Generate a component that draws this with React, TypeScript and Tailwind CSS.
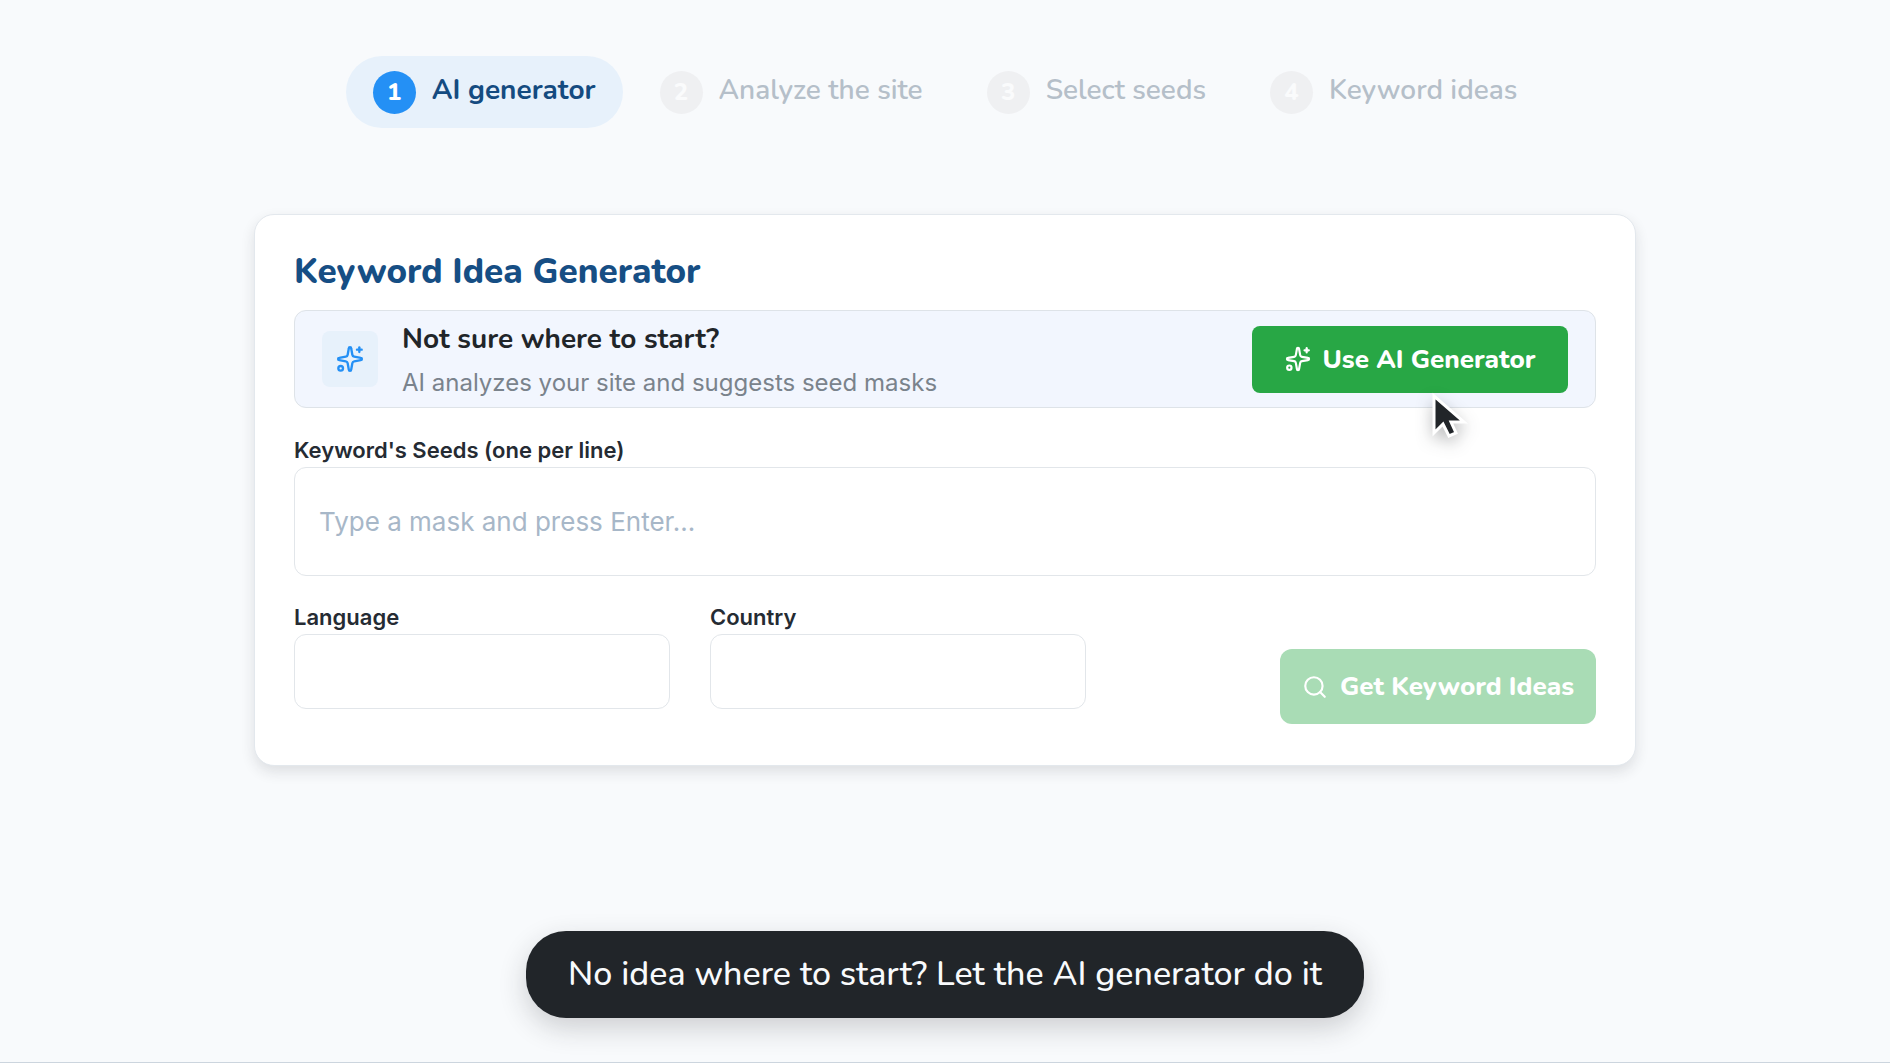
import { Search } from "lucide-react";

const steps = [
  "AI generator",
  "Analyze the site",
  "Select seeds",
  "Keyword ideas",
];

function SparkIcon({ className }: { className: string }) {
  return (
    <svg
      viewBox="0 0 24 24"
      fill="none"
      stroke="currentColor"
      strokeWidth="2"
      strokeLinecap="round"
      strokeLinejoin="round"
      className={className}
    >
      <path d="M11 2.8a1 1 0 0 1 2 0l1 5.600a2 2 0 0 0 1.600 1.600l5.600 1a1 1 0 0 1 0 2l-5.600 1a2 2 0 0 0-1.600 1.600l-1 5.600a1 1 0 0 1-2 0l-1-5.600a2 2 0 0 0-1.600-1.600l-5.600-1a1 1 0 0 1 0-2l5.600-1a2 2 0 0 0 1.600-1.600z" />
      <path d="M20 2v4" />
      <path d="M22 4h-4" />
      <circle cx="4" cy="20" r="2" />
    </svg>
  );
}

function Pointer() {
  return (
    <svg
      viewBox="0 0 36 48"
      className="absolute left-[180px] top-[66px] w-9 h-12 overflow-visible drop-shadow-[0_6px_8px_rgba(33,37,41,0.3)]"
    >
      <path
        d="M2 4v37l9-9 6 12 7-3-5-11h13z"
        fill="#212529"
        stroke="#fff"
        strokeWidth="3"
      />
    </svg>
  );
}

export default function App() {
  return (
    <div className="min-h-screen flex flex-col bg-[#f8fafc] border-b border-[#ccd5de] pt-14 pb-11 px-8 font-[Nunito,Lato,sans-serif]">

      {/* Steps */}

      <nav className="flex justify-center">
        <ol className="flex gap-2.5">
          {steps.map((step, index) => (
            <li
              key={step}
              aria-current={index === 0 ? "step" : undefined}
              className={
                index === 0
                  ? "h-[72px] px-[27px] rounded-full flex items-center gap-4 bg-[#e7f1fb] text-[#144b80] font-bold"
                  : "h-[72px] px-[27px] rounded-full flex items-center gap-4 text-[#b5bfc9] font-semibold"
              }
            >
              <span
                className={
                  index === 0
                    ? "size-[43px] rounded-full flex items-center justify-center text-[24px] font-extrabold bg-[#2490f5] text-white"
                    : "size-[43px] rounded-full flex items-center justify-center text-[24px] font-extrabold bg-[#eff0f2] text-[#fafbfc]"
                }
              >
                {index + 1}
              </span>
              <span className="text-[28px] leading-[40px] pb-1 whitespace-nowrap">
                {step}
              </span>
            </li>
          ))}
        </ol>
      </nav>

      {/* Generator card */}

      <form className="w-full max-w-[1382px] mx-auto mt-[86px] mb-10 pt-9 pb-[41px] px-[39px] bg-white rounded-[20px] border border-[#e3e8ed] shadow-[0_6px_14px_rgba(33,37,41,0.12)]">

        <h1 className="text-[35px] leading-[42px] font-extrabold text-[#164e84]">
          Keyword Idea Generator
        </h1>

        <div className="mt-[17px] h-[98px] px-[27px] flex items-center gap-6 rounded-xl border border-[#dee3e8] bg-[#f2f6fe]">

          <div className="size-14 rounded-lg bg-[#e7f1fb] flex items-center justify-center">
            <SparkIcon className="size-7 text-[#2490f5]" />
          </div>

          <div className="flex-1 pt-1">
            <h2 className="text-[28px] leading-[43px] font-bold text-[#212529]">
              Not sure where to start?
            </h2>
            <p className="font-[Inter,sans-serif] text-[24px] leading-[43px] text-[#7a838c]">
              AI analyzes your site and suggests seed masks
            </p>
          </div>

          <div className="relative">
            <button
              type="button"
              className="w-[316px] h-[67px] rounded-lg flex items-center justify-center gap-3 bg-[#28a745] text-white text-[26px] font-extrabold"
            >
              <SparkIcon className="size-[26px]" />
              Use AI Generator
            </button>
            <Pointer />
          </div>

        </div>

        <div className="mt-[25px]">
          <label
            htmlFor="seeds"
            className="block font-[Inter,sans-serif] text-[22px] leading-[34px] font-semibold text-[#252b33]"
          >
            Keyword's Seeds (one per line)
          </label>
          <input
            id="seeds"
            type="text"
            placeholder="Type a mask and press Enter..."
            className="block w-full h-[109px] px-6 rounded-xl border border-[#e2e6ea] bg-white font-[Inter,sans-serif] text-[26px] placeholder:text-[#a7b7c8]"
          />
        </div>

        <div className="mt-6 grid grid-cols-[4fr_4fr_5fr] gap-10">

          <div>
            <label
              htmlFor="language"
              className="block font-[Inter,sans-serif] text-[22px] leading-[34px] font-semibold text-[#252b33]"
            >
              Language
            </label>
            <input
              id="language"
              type="text"
              className="block w-full h-[75px] px-6 rounded-xl border border-[#e2e6ea] bg-white font-[Inter,sans-serif] text-[26px]"
            />
          </div>

          <div>
            <label
              htmlFor="country"
              className="block font-[Inter,sans-serif] text-[22px] leading-[34px] font-semibold text-[#252b33]"
            >
              Country
            </label>
            <input
              id="country"
              type="text"
              className="block w-full h-[75px] px-6 rounded-xl border border-[#e2e6ea] bg-white font-[Inter,sans-serif] text-[26px]"
            />
          </div>

          <div className="pt-[49px] flex justify-end">
            <button
              type="submit"
              disabled
              className="w-[316px] h-[75px] rounded-xl flex items-center justify-center gap-3 bg-[#a9dcb5] text-white text-[26px] font-extrabold"
            >
              <Search size={26} strokeWidth={2} />
              Get Keyword Ideas
            </button>
          </div>

        </div>

      </form>

      {/* Caption */}

      <p className="mt-auto self-center h-[87px] px-[42px] flex items-center rounded-[40px] bg-[#212529] text-[#f8fafc] text-[34px] font-medium shadow-[0_10px_28px_rgba(33,37,41,0.2)]">
        No idea where to start? Let the AI generator do it
      </p>

    </div>
  );
}
